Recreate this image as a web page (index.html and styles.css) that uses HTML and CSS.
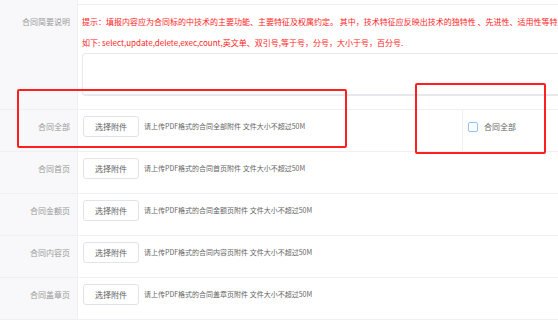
FILE: index.html
```html
<html lang="zh-CN">

<head>
    <meta charset="UTF-8">
    <meta name="viewport" content="width=device-width, initial-scale=1.0">
    <title>合同附件</title>
    <link rel="stylesheet" href="styles.css">
</head>

<body>
    <div class="form">
        <div class="form-row stub">
            <div class="label"></div>
            <div class="cell"></div>
        </div>

        <!-- 合同简要说明 -->
        <div class="form-row">
            <div class="label">合同简要说明</div>
            <div class="cell desc">
                <p class="tip">提示：填报内容应为合同标的中技术的主要功能、主要特征及权属约定。 其中，技术特征应反映出技术的独特性 、先进性、适用性等特点。</p>
                <p class="tip">如下: select,update,delete,exec,count,英文单、双引号,等于号，分号，大小于号，百分号.</p>
                <textarea class="desc-input"></textarea>
            </div>
        </div>

        <!-- 附件上传 -->
        <div class="form-row upload">
            <div class="label">合同全部</div>
            <div class="cell main">
                <button class="file-btn">选择附件</button>
                <span class="hint">请上传PDF格式的合同全部附件 文件大小不超过50M</span>
            </div>
            <div class="cell side">
                <label class="check"><span class="box"></span>合同全部</label>
            </div>
        </div>
        <div class="form-row upload">
            <div class="label">合同首页</div>
            <div class="cell">
                <button class="file-btn">选择附件</button>
                <span class="hint">请上传PDF格式的合同首页附件 文件大小不超过50M</span>
            </div>
        </div>
        <div class="form-row upload">
            <div class="label">合同金额页</div>
            <div class="cell">
                <button class="file-btn">选择附件</button>
                <span class="hint">请上传PDF格式的合同金额页附件 文件大小不超过50M</span>
            </div>
        </div>
        <div class="form-row upload">
            <div class="label">合同内容页</div>
            <div class="cell">
                <button class="file-btn">选择附件</button>
                <span class="hint">请上传PDF格式的合同内容页附件 文件大小不超过50M</span>
            </div>
        </div>
        <div class="form-row upload">
            <div class="label">合同盖章页</div>
            <div class="cell">
                <button class="file-btn">选择附件</button>
                <span class="hint">请上传PDF格式的合同盖章页附件 文件大小不超过50M</span>
            </div>
        </div>
    </div>

    <!-- 标注框 -->
    <div class="mark mark-a"></div>
    <div class="mark mark-b"></div>
</body>

</html>
```

FILE: styles.css
```css
/* Global Styles */
html,
body {
    margin: 0;
    padding: 0;
    overflow: hidden;
    background-color: #fff;
}

body {
    font-family: "Noto Sans CJK SC", "Liberation Sans", sans-serif;
    color: #606266;
}

/* Form Table */
.form {
    width: 700px;
}

.form-row {
    display: flex;
    border-bottom: 1px solid #eef0f5;
}

.form-row.stub {
    height: 4px;
}

.label {
    box-sizing: border-box;
    width: 78px;
    flex-shrink: 0;
    padding: 6px 7px 0 0;
    background-color: #f8f8fa;
    border-right: 1px solid #eef0f5;
    text-align: right;
    font-size: 8px;
    line-height: 21px;
    color: #999;
}

.cell {
    flex: 1;
    box-sizing: border-box;
    padding: 6px 0 0 5px;
}

/* Description */
.desc {
    padding: 6px 0 13px 4px;
}

.tip {
    margin: 0;
    font-size: 8px;
    line-height: 21px;
    color: #f22;
    white-space: nowrap;
}

.desc-input {
    display: block;
    box-sizing: border-box;
    width: 100%;
    height: 43px;
    margin: 0;
    border: 1px solid #e6e8ee;
    border-bottom-width: 2px;
    border-radius: 4px;
    resize: none;
    outline: none;
}

/* Upload Rows */
.upload {
    height: 42px;
    box-sizing: border-box;
}

.upload .cell {
    display: flex;
    align-items: flex-start;
}

.cell.main {
    flex: none;
    width: 385px;
    border-right: 1px solid #eef0f5;
}

.file-btn {
    box-sizing: border-box;
    width: 56px;
    height: 21px;
    padding: 0;
    border: 1px solid #e0e3e9;
    border-radius: 3px;
    background-color: #fff;
    font-family: inherit;
    font-size: 8px;
    color: #606266;
    cursor: pointer;
}

.hint {
    margin-left: 5px;
    font-size: 7px;
    line-height: 21px;
    color: #666;
    white-space: nowrap;
}

/* Checkbox */
.check {
    display: flex;
    align-items: center;
    height: 21px;
    font-size: 8px;
    color: #666;
}

.box {
    box-sizing: border-box;
    width: 10px;
    height: 10px;
    margin-right: 6px;
    border: 1px solid #8fc3f5;
    border-radius: 2px;
    background-color: #fff;
}

/* Annotation Marks */
.mark {
    position: absolute;
    border: 2px solid #ff1f1f;
    border-radius: 2px;
}

.mark-a {
    left: 17px;
    top: 89px;
    width: 326px;
    height: 55px;
}

.mark-b {
    left: 415px;
    top: 83px;
    width: 127px;
    height: 67px;
}
```
